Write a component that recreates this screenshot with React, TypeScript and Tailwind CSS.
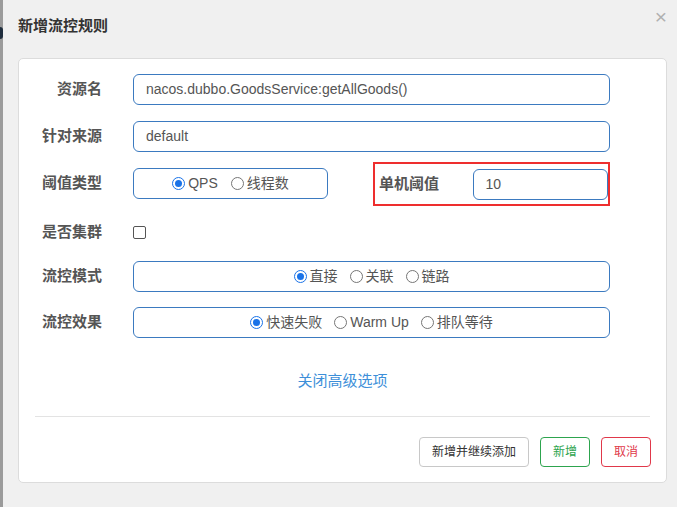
import React from "react";

const font = { fontFamily: '"Liberation Sans", "Noto Sans CJK SC", sans-serif' };

function Radio({ checked, label }: { checked?: boolean; label: string }) {
  return (
    <span className="flex items-center">
      <span
        className={
          checked
            ? "w-[13px] h-[13px] rounded-full border border-[#1a73e8] flex items-center justify-center"
            : "w-[13px] h-[13px] rounded-full border border-[#767676]"
        }
      >
        {checked && <span className="w-[7px] h-[7px] rounded-full bg-[#1a73e8]" />}
      </span>
      <span className="ml-[3px] text-[14px] text-[#555]">{label}</span>
    </span>
  );
}

function Label({ text }: { text: string }) {
  return (
    <div className="w-[83px] shrink-0 text-right text-[15px] font-bold text-[#555]">{text}</div>
  );
}

const inputCls =
  "h-[31px] border border-[#3b7ac0] rounded-[6px] flex items-center px-[12px] text-[14px] text-[#555]";

export default function App() {
  return (
    <div className="w-[677px] h-[507px] flex bg-[#f0f0f0] overflow-hidden" style={font}>
      {/* page behind */}
      <div className="w-[3px] h-full bg-[#9b9b9b] relative">
        <div className="absolute left-[-3px] top-[27px] w-[6px] h-[12px] rounded-full bg-[#1f2d3d]" />
      </div>

      {/* modal */}
      <div className="flex-1 relative bg-[#f0f0f0] rounded-tl-[6px] flex flex-col">
        <div className="h-[58px] pl-[15px] pt-[16px]">
          <div className="text-[15px] leading-[20px] font-bold text-[#333]">新增流控规则</div>
        </div>
        <div className="absolute right-[10px] top-[6px] text-[#b0b0b0] text-[21px] leading-[21px]">×</div>

        <div className="ml-[15px] mr-[10px] h-[425px] bg-white border border-[#dcdcdc] rounded-[5px] flex flex-col pt-[15px]">
          <div className="flex flex-col gap-[16px]">
            <div className="flex items-center h-[31px]">
              <Label text="资源名" />
              <div className={`ml-[31px] w-[477px] ${inputCls}`}>nacos.dubbo.GoodsService:getAllGoods()</div>
            </div>

            <div className="flex items-center h-[31px]">
              <Label text="针对来源" />
              <div className={`ml-[31px] w-[477px] ${inputCls}`}>default</div>
            </div>

            <div className="flex items-center h-[31px]">
              <Label text="阈值类型" />
              <div className="ml-[31px] w-[195px] h-[31px] border border-[#3b7ac0] rounded-[6px] flex items-center justify-center gap-[13px]">
                <Radio checked label="QPS" />
                <Radio label="线程数" />
              </div>
              <div className="ml-[45px] w-[237px] h-[44px] border-2 border-[#ee2e2e] flex items-center pl-[4px] mt-[1px]">
                <div className="w-[94px] text-[15px] font-bold text-[#555]">单机阈值</div>
                <div className={`w-[136px] ${inputCls}`}>10</div>
              </div>
            </div>

            <div className="flex items-center h-[30px] pt-[4px]">
              <Label text="是否集群" />
              <div className="ml-[31px] w-[13px] h-[13px] border border-[#555] rounded-[2px]" />
            </div>

            <div className="flex items-center h-[31px]">
              <Label text="流控模式" />
              <div className="ml-[31px] w-[477px] h-[31px] border border-[#3b7ac0] rounded-[6px] flex items-center justify-center gap-[12px]">
                <Radio checked label="直接" />
                <Radio label="关联" />
                <Radio label="链路" />
              </div>
            </div>

            <div className="flex items-center h-[31px] -mt-[1px]">
              <Label text="流控效果" />
              <div className="ml-[31px] w-[477px] h-[31px] border border-[#3b7ac0] rounded-[6px] flex items-center justify-center gap-[12px]">
                <Radio checked label="快速失败" />
                <Radio label="Warm Up" />
                <Radio label="排队等待" />
              </div>
            </div>
          </div>

          <div className="mt-[33px] text-center text-[15px] leading-[20px] text-[#3d8fd9]">关闭高级选项</div>

          <div className="mt-[25px] mx-[16px] h-px bg-[#e3e3e3]" />

          <div className="mt-[20px] mx-[15px] flex justify-end gap-[11px]">
            <div className="h-[30px] px-[12px] border border-[#c8c8c8] rounded-[4px] flex items-center text-[12px] text-[#333]">
              新增并继续添加
            </div>
            <div className="h-[30px] px-[12px] border border-[#2da44e] rounded-[4px] flex items-center text-[12px] text-[#2da44e]">
              新增
            </div>
            <div className="h-[30px] px-[12px] border border-[#e0384a] rounded-[4px] flex items-center text-[12px] text-[#e0384a]">
              取消
            </div>
          </div>
        </div>
      </div>
    </div>
  );
}
